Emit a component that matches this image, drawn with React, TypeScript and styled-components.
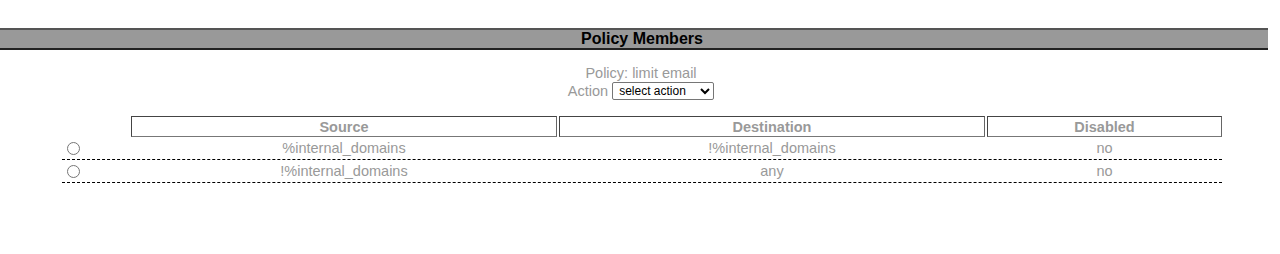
import React from "react";
import styled, { createGlobalStyle } from "styled-components";

const Global = createGlobalStyle`
  html, body { margin: 0; padding: 0; background: #fff; }
  body { font-family: "Liberation Sans", Arial, sans-serif; }
`;

const Page = styled.div`
  padding-top: 28px;
  width: 1280px;
`;

const TitleBar = styled.div`
  width: 1268px;
  box-sizing: border-box;
  height: 22px;
  background: #999999;
  border-top: 2px solid #555;
  border-bottom: 2px solid #222;
  display: flex;
  align-items: center;
  justify-content: center;
  padding-left: 16px;
  font-weight: bold;
  font-size: 16px;
  color: #000;
`;

const Info = styled.div`
  margin-top: 15px;
  display: flex;
  flex-direction: column;
  align-items: center;
  padding-left: 2px;
  color: #999;
  font-size: 14.5px;
`;

const InfoLine = styled.div`
  display: flex;
  align-items: center;
  gap: 4px;
  line-height: 17px;
`;

const Select = styled.select`
  font-family: "Liberation Sans", Arial, sans-serif;
  font-size: 12px;
  height: 18px;
  width: 102px;
  color: #000;
  background: #fff;
  border: 1px solid #767676;
  border-radius: 2px;
  padding: 0 0 0 2px;
`;

const Table = styled.div`
  margin: 16px 0 0 62px;
  width: 1160px;
  display: flex;
  flex-direction: column;
`;

const Grid = styled.div<{ $dashed?: boolean }>`
  display: grid;
  grid-template-columns: 67px 426px 426px 235px;
  column-gap: 2px;
  align-items: center;
  border-bottom: ${(p) => (p.$dashed ? "1px dashed #000" : "none")};
`;

const HeadCell = styled.div`
  height: 21px;
  box-sizing: border-box;
  border: 1px solid #444;
  border-bottom-color: #777;
  border-right-color: #666;
  display: flex;
  align-items: center;
  justify-content: center;
  font-weight: bold;
  font-size: 14.5px;
  color: #999;
`;

const Cell = styled.div`
  height: 22px;
  display: flex;
  align-items: center;
  justify-content: center;
  font-size: 14.5px;
  color: #999;
`;

const RadioCell = styled.div`
  height: 22px;
  display: flex;
  align-items: center;
`;

const Radio = styled.input`
  margin: 0 0 0 5px;
  width: 13px;
  height: 13px;
  accent-color: #999;
`;

const rows = [
  { src: "%internal_domains", dst: "!%internal_domains", dis: "no" },
  { src: "!%internal_domains", dst: "any", dis: "no" },
];

export default function App() {
  return (
    <Page>
      <Global />
      <TitleBar>Policy Members</TitleBar>
      <Info>
        <InfoLine>Policy: limit email</InfoLine>
        <InfoLine>
          Action
          <Select defaultValue="">
            <option value="">select action</option>
            <option value="add">add member</option>
            <option value="delete">delete member</option>
          </Select>
        </InfoLine>
      </Info>
      <Table>
        <Grid>
          <div />
          <HeadCell>Source</HeadCell>
          <HeadCell>Destination</HeadCell>
          <HeadCell>Disabled</HeadCell>
        </Grid>
        {rows.map((r, i) => (
          <Grid $dashed key={i}>
            <RadioCell>
              <Radio type="radio" name="member" />
            </RadioCell>
            <Cell>{r.src}</Cell>
            <Cell>{r.dst}</Cell>
            <Cell>{r.dis}</Cell>
          </Grid>
        ))}
      </Table>
    </Page>
  );
}
